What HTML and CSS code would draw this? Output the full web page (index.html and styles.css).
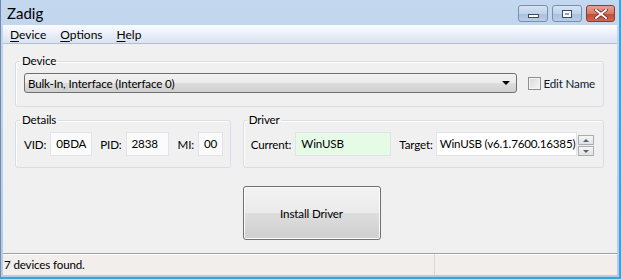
FILE: index.html
```html
<!DOCTYPE html>
<html lang="en">

<head>
    <meta charset="UTF-8">
    <title>Zadig</title>
    <link rel="stylesheet" href="styles.css">
</head>

<body>
    <div class="window">
        <div class="titlebar">
            <span class="title">Zadig</span>
            <div class="caption-buttons">
                <button class="cap"><span class="glyph-min"></span></button>
                <button class="cap"><span class="glyph-max"></span></button>
                <button class="cap close">
                    <svg width="14" height="10" viewBox="0 0 14 10">
                        <path d="M2 1 L12 9 M12 1 L2 9" stroke="#5a1e14" stroke-width="3.4" stroke-linecap="square" />
                        <path d="M2 1 L12 9 M12 1 L2 9" stroke="#ffffff" stroke-width="2" stroke-linecap="square" />
                    </svg>
                </button>
            </div>
        </div>
        <div class="frame">
            <div class="menubar">
                <span class="menu-item"><u>D</u>evice</span>
                <span class="menu-item"><u>O</u>ptions</span>
                <span class="menu-item"><u>H</u>elp</span>
            </div>
            <div class="client">
                <fieldset class="group device-group">
                    <legend>Device</legend>
                    <div class="row">
                        <div class="combo">
                            <span>Bulk-In, Interface (Interface 0)</span>
                            <span class="arrow"></span>
                        </div>
                        <label class="check"><span class="box"></span>Edit Name</label>
                    </div>
                </fieldset>

                <div class="groups">
                    <fieldset class="group details">
                        <legend>Details</legend>
                        <div class="row">
                            <span class="lbl">VID:</span>
                            <span class="field vid">0BDA</span>
                            <span class="lbl pid-lbl">PID:</span>
                            <span class="field pid">2838</span>
                            <span class="lbl mi-lbl">MI:</span>
                            <span class="field mi">00</span>
                        </div>
                    </fieldset>
                    <fieldset class="group driver">
                        <legend>Driver</legend>
                        <div class="row">
                            <span class="lbl">Current:</span>
                            <span class="field current">WinUSB</span>
                            <span class="lbl target-lbl">Target:</span>
                            <span class="field target">WinUSB (v6.1.7600.16385)</span>
                            <div class="spin">
                                <span class="spin-btn"><span class="tri-up"></span></span>
                                <span class="spin-btn"><span class="tri-down"></span></span>
                            </div>
                        </div>
                    </fieldset>
                </div>

                <div class="actions">
                    <button class="install">Install Driver</button>
                </div>
            </div>
            <div class="statusbar">
                <span class="status-text">7 devices found.</span>
                <span class="status-cell"></span>
            </div>
        </div>
    </div>
</body>

</html>
```

FILE: styles.css
```css
:root {
    --face: #f0f0f0;
    --group-line: #d5dfe5;
    --text: #000;
}

* {
    box-sizing: border-box;
}

body {
    margin: 0;
    width: 621px;
    height: 279px;
    overflow: hidden;
    font-family: Lato, "Noto Sans", sans-serif;
    font-size: 11.6px;
    letter-spacing: -0.15px;
    white-space: nowrap;
    color: var(--text);
}

.window {
    width: 621px;
    height: 279px;
    display: flex;
    flex-direction: column;
    background: linear-gradient(to bottom, #c3d7ee, #b3cbe7);
    border-left: 1px solid #6f8cae;
    border-right: 2px solid #3aa3dc;
    border-bottom: 2px solid #3aa3dc;
}

.titlebar {
    height: 25px;
    display: flex;
    align-items: center;
    justify-content: space-between;
    padding: 0 4px 0 6px;
}

.title {
    font-size: 15px;
    letter-spacing: 0;
    margin-top: 1px;
}

.caption-buttons {
    display: flex;
    gap: 4px;
    align-self: flex-start;
    margin-top: 5px;
}

.cap {
    width: 30px;
    height: 17px;
    padding: 0;
    border: 1px solid #7a8fab;
    border-radius: 3px;
    background: linear-gradient(to bottom, #d6e3f2 0%, #c0d3ea 50%, #a9c1df 51%, #b8cde8 100%);
    display: flex;
    align-items: center;
    justify-content: center;
}

.glyph-min {
    width: 11px;
    height: 4px;
    margin-top: 5px;
    background: #fff;
    border: 1px solid #3b4b60;
}

.glyph-max {
    width: 10px;
    height: 8px;
    border: 1px solid #3b4b60;
    box-shadow: inset 0 0 0 2px #fff;
    background: #8ba3c2;
}

.close {
    width: 29px;
    border-color: #8e3b2b;
    background: linear-gradient(to bottom, #e3a394 0%, #d47a66 50%, #c24a33 51%, #d1684f 100%);
}

.frame {
    flex: 1;
    display: flex;
    flex-direction: column;
    margin: 0 2px 2px 2px;
    background: var(--face);
}

.menubar {
    height: 19px;
    display: flex;
    align-items: center;
    background: linear-gradient(to bottom, #fbfcfe, #e6ecf7 60%, #dbe3f2);
    border-bottom: 1px solid #b6bfd1;
}

.menu-item {
    padding: 0 7px;
    font-size: 12px;
    letter-spacing: 0;
}

.menu-item u {
    text-decoration-thickness: 1px;
    text-underline-offset: 2px;
}

.client {
    height: 209px;
    padding: 10px 13px 0 12px;
}

.group {
    margin: 0;
    border: 1px solid var(--group-line);
    border-radius: 3px;
    box-shadow: inset 1px 1px 0 #fff;
    min-width: 0;
}

.group legend {
    padding: 0 2px;
    margin-left: -4px;
    line-height: 14px;
}

.row {
    display: flex;
    align-items: center;
}

.device-group {
    padding: 5px 8px 13px 8px;
}

.combo {
    flex: 1;
    height: 20px;
    display: flex;
    align-items: center;
    justify-content: space-between;
    padding: 0 6px 0 3px;
    border: 1px solid #707070;
    border-radius: 3px;
    background: linear-gradient(to bottom, #f2f2f2 0%, #ebebeb 50%, #dddddd 51%, #cfcfcf 100%);
}

.arrow {
    width: 0;
    height: 0;
    border-left: 4px solid transparent;
    border-right: 4px solid transparent;
    border-top: 4px solid #000;
}

.check {
    display: flex;
    align-items: center;
    margin-left: 11px;
    color: #0a1a33;
}

.box {
    width: 13px;
    height: 13px;
    margin-right: 2px;
    border: 1px solid #8e8f8f;
    background: linear-gradient(135deg, #d9d9d9, #f6f6f6);
    box-shadow: inset 0 0 0 1px #f4f4f4;
}

.groups {
    display: flex;
    gap: 12px;
    margin-top: 6px;
}

.details {
    width: 216px;
    padding: 5px 8px 11px 8px;
}

.driver {
    width: 362px;
    padding: 5px 4px 11px 7px;
}

.field {
    flex-shrink: 0;
    height: 24px;
    display: flex;
    align-items: center;
    padding: 0 0 2px 5px;
    border: 1px solid #e2e3ea;
    background: #fbfbfb;
}

.vid {
    width: 42px;
    margin-left: 4px;
}

.pid-lbl {
    margin-left: 8px;
}

.pid {
    width: 43px;
    margin-left: 4px;
}

.mi-lbl {
    margin-left: 9px;
}

.mi {
    width: 25px;
    margin-left: 4px;
}

.current {
    width: 96px;
    margin-left: 4px;
    background: #e6fbe6;
}

.target-lbl {
    margin-left: 8px;
}

.target {
    width: 141px;
    margin-left: 3px;
    background: #fff;
    padding-left: 3px;
    letter-spacing: -0.2px;
}

.spin {
    flex-shrink: 0;
    display: flex;
    flex-direction: column;
    gap: 1px;
    margin: 3px 0 0 1px;
}

.spin-btn {
    width: 16px;
    height: 10px;
    display: flex;
    align-items: center;
    justify-content: center;
    border: 1px solid #acacac;
    background: linear-gradient(to bottom, #f6f6f6, #e2e2e2);
}

.tri-up,
.tri-down {
    width: 0;
    height: 0;
    border-left: 3px solid transparent;
    border-right: 3px solid transparent;
}

.tri-up {
    border-bottom: 3px solid #4d6185;
}

.tri-down {
    border-top: 3px solid #4d6185;
}

.actions {
    display: flex;
    justify-content: center;
    padding-left: 4px;
    margin-top: 18px;
}

.install {
    width: 138px;
    height: 54px;
    font-family: inherit;
    font-size: 11.6px;
    letter-spacing: -0.15px;
    color: #000;
    border: 1px solid #707070;
    border-radius: 3px;
    box-shadow: inset 0 0 0 1px #fcfcfc;
    background: linear-gradient(to bottom, #f2f2f2 0%, #ebebeb 50%, #dddddd 51%, #cfcfcf 100%);
}

.statusbar {
    flex: 1;
    display: flex;
    align-items: center;
    background: #f1eeec;
    border-top: 1px solid #a0a0a0;
    box-shadow: inset 0 1px 0 #fff;
}

.status-text {
    flex: 1;
    padding-left: 1px;
}

.status-cell {
    width: 183px;
    align-self: stretch;
    border-left: 1px solid #d9d6d4;
}
```
